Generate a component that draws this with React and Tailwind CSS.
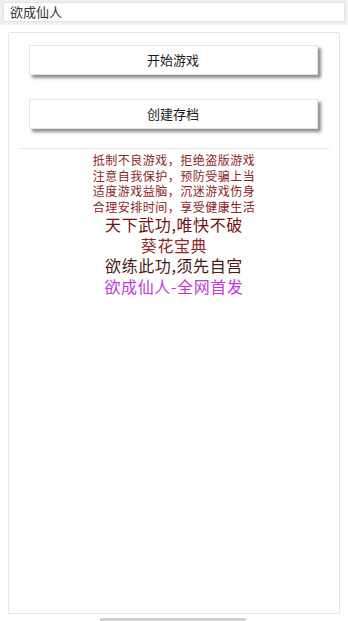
export default function App() {
  const notice = [
    "抵制不良游戏，拒绝盗版游戏",
    "注意自我保护，预防受骗上当",
    "适度游戏益脑，沉迷游戏伤身",
    "合理安排时间，享受健康生活",
  ];

  return (
    <div
      className="w-[348px] h-[621px] bg-white overflow-hidden flex flex-col"
      style={{ fontFamily: '"Noto Sans CJK SC", "Noto Sans", sans-serif' }}
    >
      {/* title bar */}
      <div className="bg-[#efefef] px-[3px] pt-[2px] pb-[3px]">
        <div className="h-[20px] bg-white border border-[#e2e2e2] flex items-center pl-[6px] text-[13px] text-[#333]">
          欲成仙人
        </div>
      </div>

      {/* main panel */}
      <div className="flex-1 mx-[8px] mt-[7px] mb-[7px] border border-[#e4e4e4] rounded-[2px] flex flex-col items-center">
        <button className="mt-[12px] mr-[2px] w-[289px] h-[30px] bg-white border border-[#e6e6e6] shadow-[3px_3px_3px_rgba(0,0,0,0.45)] text-[13px] text-[#1a1a1a]">
          开始游戏
        </button>
        <button className="mt-[24px] mr-[2px] w-[289px] h-[30px] bg-white border border-[#e6e6e6] shadow-[3px_3px_3px_rgba(0,0,0,0.45)] text-[13px] text-[#1a1a1a]">
          创建存档
        </button>

        <div className="mt-[19px] w-[310px] h-px bg-[#e4e4e4]" />

        <div className="mt-[3px] flex flex-col items-center">
          {notice.map((line) => (
            <div key={line} className="text-[12px] leading-[15.5px] tracking-[0.5px] text-[#8b2525]">
              {line}
            </div>
          ))}
          <div className="text-[16px] leading-[20.5px] tracking-[0.6px] text-[#701212]">天下武功,唯快不破</div>
          <div className="text-[16px] leading-[20.5px] tracking-[0.6px] text-[#8b2a2a]">葵花宝典</div>
          <div className="text-[16px] leading-[20.5px] tracking-[0.6px] text-[#4a1818]">欲练此功,须先自宫</div>
          <div className="text-[16px] leading-[20.5px] tracking-[0.6px] text-[#c03ad6]">欲成仙人-全网首发</div>
        </div>
      </div>

      {/* scroll indicator */}
      <div className="absolute left-[100px] top-[618px] w-[146px] h-[3px] bg-[#d0d0d0]" />
    </div>
  );
}
